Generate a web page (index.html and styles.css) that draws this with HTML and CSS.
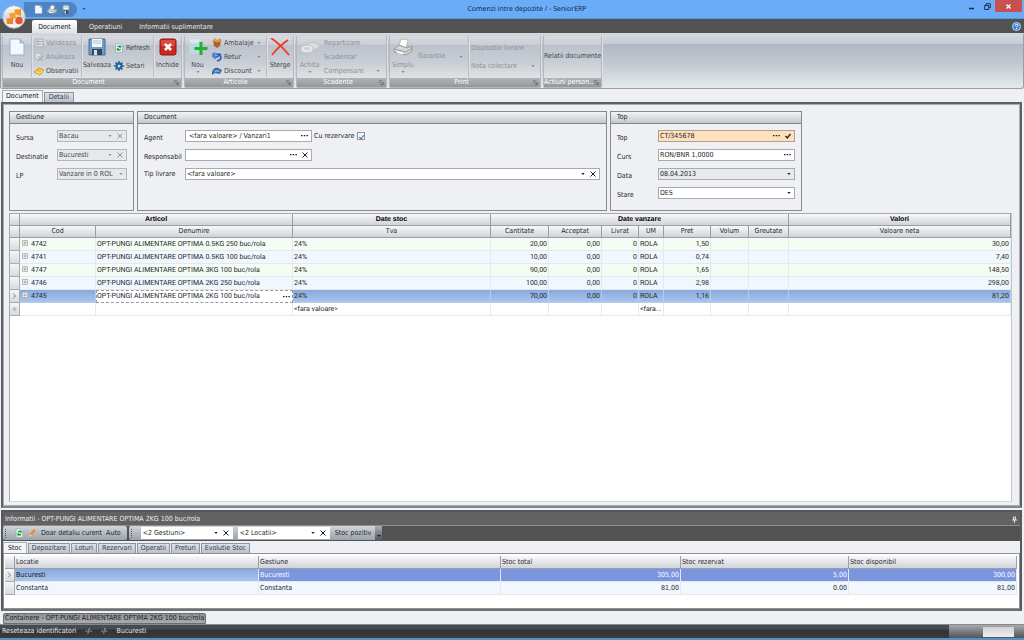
FILE: index.html
```html
<!DOCTYPE html>
<html lang="ro">
<head>
<meta charset="utf-8">
<title>Comenzi intre depozite / - SeniorERP</title>
<link rel="stylesheet" href="styles.css">
</head>
<body>
<svg class="defs" aria-hidden="true">
  <symbol id="i-page" viewBox="0 0 16 18"><path d="M1 1h10l4 4v12H1z" fill="#f4f9ff" stroke="#8fb2d8"/><path d="M11 1v4h4z" fill="#b9d4ee" stroke="#8fb2d8"/></symbol>
  <symbol id="i-floppy" viewBox="0 0 18 18"><path d="M1 1h16v16H1z" fill="#6f9cc2" stroke="#4a7093"/><path d="M4 1h10v8H4z" fill="#f2f6fa"/><path d="M5 3h8M5 5h8" stroke="#b4c2cf"/><path d="M4 11h10v6H4z" fill="#33475c"/><path d="M6 12h3v5H6z" fill="#d5dfe8"/></symbol>
  <symbol id="i-printer" viewBox="0 0 20 18"><path d="M8 1l7 1-2 8H5z" fill="#fff" stroke="#bbb"/><path d="M1 11l5-4 8 3 5-2v5l-6 4-12-3z" fill="#d5d6d8" stroke="#999"/><path d="M1 11l12 3 6-4" fill="none" stroke="#999"/><path d="M4 13l6 1.500v2L4 15z" fill="#fafafa"/></symbol>
  <symbol id="i-refresh" viewBox="0 0 10 12"><path d="M1 1h6l2 2v8H1z" fill="#fff" stroke="#8ba6c4"/><path d="M3 5q2-3 4 0M7 3v2H5M7 7q-2 3-4 0M3 9V7h2" fill="none" stroke="#149a31" stroke-width="1.4"/></symbol>
  <symbol id="i-arrow" viewBox="0 0 5 3"><path d="M0 0h5L2.500 3z" fill="currentColor"/></symbol>
  <symbol id="i-dots" viewBox="0 0 7 2"><path d="M0 0h1.500v1.200H0zM2.700 0h1.500v1.200H2.700zM5.400 0h1.500v1.200H5.400z" fill="currentColor"/></symbol>
  <symbol id="i-x" viewBox="0 0 6 6"><path d="M.5.5l5 5M5.500.5l-5 5" stroke="currentColor" stroke-width="1"/></symbol>
  <symbol id="i-plus" viewBox="0 0 6 6"><path d="M.5.5h5v5h-5z" fill="#f3f3f3" stroke="#b4b8bc"/><path d="M1.500 3h3M3 1.500v3" stroke="#888" stroke-width=".7"/></symbol>
  <symbol id="i-launch" viewBox="0 0 6 6"><path d="M.5 4V.5H4" fill="none" stroke="#777"/><path d="M2 2l3 3M5 2.500V5.500H2" fill="none" stroke="#666"/></symbol>
  <symbol id="i-row" viewBox="0 0 4 6"><path d="M.5.5L3 3 .5 5.500" fill="none" stroke="#7a808a"/></symbol>
</svg>
<div class="app">
  <header class="titlebar">
    <div class="quick">
      <button aria-label="Nou"><svg class="q1"><use href="#i-page"/></svg></button>
      <button aria-label="Print"><svg class="q2"><use href="#i-printer"/></svg></button>
      <button aria-label="Salveaza"><svg class="q2"><use href="#i-floppy"/></svg></button>
    </div>
    <button class="quick-more" aria-label="Mai mult"><svg class="arrow"><use href="#i-arrow"/></svg></button>
    <h1>Comenzi intre depozite / - SeniorERP</h1>
    <div class="winbtns">
      <button aria-label="Minimizare"><svg viewBox="0 0 7 7"><path d="M1 5.500h5" stroke="#1c2a3c" stroke-width="1.500"/></svg></button>
      <button aria-label="Restaurare"><svg viewBox="0 0 7 7"><path d="M.7 2.500h4v4h-4zM2 2V.7h4.300v4H5" fill="none" stroke="#1c3350"/></svg></button>
      <button class="close" aria-label="Inchide"><svg viewBox="0 0 7 7"><path d="M1.500 1.500l4 4M5.500 1.500l-4 4" stroke="#fff" stroke-width="1.200"/></svg></button>
    </div>
  </header>
  <button class="orb" aria-label="Meniu">
    <svg viewBox="0 0 24 24"><defs><linearGradient id="og" x2="0" y2="1"><stop offset="0" stop-color="#fff"/><stop offset=".5" stop-color="#d6d9dd"/><stop offset="1" stop-color="#f8fafb"/></linearGradient></defs><circle cx="12" cy="12" r="11.300" fill="url(#og)" stroke="#aab3bd"/><path d="M12.500 4.500l6.500-.5v7l-6-2z" fill="#f9931e"/><path d="M7 8.500l6-1 1 5-5 2z" fill="#f9a02c"/><path d="M4.500 13.500l6.500-.5v6H5z" fill="#f58220"/><circle cx="17" cy="15.500" r="3.700" fill="#df5a2a"/></svg>
  </button>
  <nav class="menu">
    <button class="on">Document</button><button>Operatiuni</button><button>Informatii suplimentare</button>
    <button class="help" aria-label="Ajutor"><svg viewBox="0 0 9 9"><circle cx="4.500" cy="4.500" r="4" fill="#3f87d6" stroke="#bcd9f5"/><path d="M3.200 3.600q.2-1.300 1.400-1.300t1.300 1.100q0 .8-1.400 1.500M4.500 6v1" stroke="#fff" fill="none"/></svg></button>
  </nav>
  <section class="ribbon">
    <div class="group g-doc">
      <div class="tools">
        <button class="big w-nou"><svg><use href="#i-page"/></svg>Nou</button>
        <div class="stack line w-val">
          <button class="off"><svg viewBox="0 0 10 10"><path d="M1 1h8v8H1z" fill="#dfe2e6" stroke="#a9adb3"/><path d="M2 3.500h6M2 6h6M4 2v6" stroke="#a9adb3"/></svg>Valideaza</button>
          <button class="off"><svg viewBox="0 0 10 10"><path d="M1 1h6v6H1z" fill="#dfe2e6" stroke="#b4b8be"/><path d="M4 4l5 5M9 4L4 9" stroke="#9a9ea5"/></svg>Anuleaza</button>
          <button><svg viewBox="0 0 10 10"><path d="M0 6l5-4 5 2-4 5z" fill="#f6bc34" stroke="#c98912" stroke-width=".7"/><path d="M2 5.700l4 1.700 2.500-3" fill="none" stroke="#fff0b8" stroke-width=".8"/></svg>Observatii</button>
        </div>
        <button class="big line w-salv"><svg><use href="#i-floppy"/></svg>Salveaza</button>
        <div class="stack two w-ref">
          <button><svg><use href="#i-refresh"/></svg>Refresh</button>
          <button><svg viewBox="0 0 10 10"><circle cx="5" cy="5" r="2.500" fill="none" stroke="#1f5f9e" stroke-width="2"/><path d="M5 0v2M5 8v2M0 5h2M8 5h2M1.500 1.500l1.400 1.400M7.100 7.100l1.400 1.400M8.500 1.500L7.100 2.900M2.900 7.100L1.500 8.500" stroke="#1f5f9e" stroke-width="1.500"/></svg>Setari</button>
        </div>
        <button class="big line w-inch"><svg viewBox="0 0 18 18"><rect x="1" y="1" width="16" height="16" rx="2" fill="#cb2a22" stroke="#8c1712"/><path d="M2 2h14v6H2z" fill="#e2625a" opacity=".6"/><path d="M6 6l6 6M12 6l-6 6" stroke="#fff" stroke-width="2.600"/></svg>Inchide</button>
      </div>
      <div class="cap"><span>Document</span><svg><use href="#i-launch"/></svg></div>
    </div>
    <div class="group g-art">
      <div class="tools">
        <button class="big w-add"><svg viewBox="0 0 20 18"><path d="M1 3q6-3 11 0v12q-6 3-11 0z" fill="#b9dbe0"/><ellipse cx="6.500" cy="3" rx="5.500" ry="2" fill="#d5ecef"/><path d="M13 4v13M6.500 10.500h13" stroke="#23b02e" stroke-width="3"/></svg>Nou<svg class="arrow"><use href="#i-arrow"/></svg></button>
        <div class="stack w-amb">
          <button><svg viewBox="0 0 10 10"><path d="M1 3l4-1 4 1-1 5-3 2-3-2z" fill="#a8652c"/><path d="M0 3l3-3 2 2 3-2 2 3-5 1.500z" fill="#d99a50"/></svg>Ambalaje<svg class="arrow"><use href="#i-arrow"/></svg></button>
          <button><svg viewBox="0 0 10 10"><path d="M1 5h4l4-3M5 9q5-1 3.500-5Q7 1 4 2.500" fill="none" stroke="#2d5fc0" stroke-width="1.700"/><path d="M0 1.500L3.500 0 4 7.500 0 5z" fill="#4d86d8"/></svg>Retur<svg class="arrow"><use href="#i-arrow"/></svg></button>
          <button><svg viewBox="0 0 10 10"><path d="M0 6q2-5 6-4l4 2-2 4-5-1-3 2z" fill="#2f6aa8"/><path d="M2 6h1l1-2 1 2 1-2 1 2h1" stroke="#9cc4ea" fill="none" stroke-width=".8"/></svg>Discount<svg class="arrow"><use href="#i-arrow"/></svg></button>
        </div>
        <button class="big line w-ster"><svg viewBox="0 0 20 18"><path d="M1 0q9 6 18 17M18 2Q8 9 2 17" fill="none" stroke="#ee3a22" stroke-width="1.800"/></svg>Sterge</button>
      </div>
      <div class="cap"><span>Articole</span><svg><use href="#i-launch"/></svg></div>
    </div>
    <div class="group g-sca">
      <div class="tools">
        <button class="big off w-ach"><svg viewBox="0 0 20 18"><ellipse cx="13" cy="8" rx="6.500" ry="3.500" fill="#dcdcdc" stroke="#bdbfc2"/><ellipse cx="7" cy="11" rx="6.500" ry="4" fill="#e6e6e6" stroke="#bdbfc2"/><ellipse cx="7" cy="10.500" rx="3" ry="1.500" fill="#cfd0d2"/></svg>Achita<svg class="arrow"><use href="#i-arrow"/></svg></button>
        <div class="stack w-rep">
          <button class="off">Repartizare</button><button class="off">Scadentar</button><button class="off">Compensare<svg class="arrow"><use href="#i-arrow"/></svg></button>
        </div>
      </div>
      <div class="cap"><span>Scadente</span><svg><use href="#i-launch"/></svg></div>
    </div>
    <div class="group g-pri">
      <div class="tools">
        <button class="big off w-sim"><svg><use href="#i-printer"/></svg>Simplu<svg class="arrow"><use href="#i-arrow"/></svg></button>
        <div class="stack one w-gar"><button class="off">Garantie<svg class="arrow"><use href="#i-arrow"/></svg></button></div>
        <div class="stack two line w-dis"><button class="off">Dispozitie livrare</button><button class="off">Nota colectare<svg class="arrow"><use href="#i-arrow"/></svg></button></div>
      </div>
      <div class="cap"><span>Print</span><svg><use href="#i-launch"/></svg></div>
    </div>
    <div class="group g-act">
      <div class="tools"><div class="stack one"><button>Relatii documente</button></div></div>
      <div class="cap"><span>Actiuni person...</span><svg><use href="#i-launch"/></svg></div>
    </div>
  </section>
  <nav class="tabs doc-tabs"><button class="on">Document</button><button>Detalii</button></nav>
  <main class="work">
    <div class="panels">
      <section class="panel p-ges">
        <h2>Gestiune</h2>
        <div class="form">
          <label for="sursa">Sursa</label>
          <div class="field dis"><select id="sursa" disabled><option>Bacau</option></select><svg class="arrow"><use href="#i-arrow"/></svg><button aria-label="Sterge sursa"><svg class="x"><use href="#i-x"/></svg></button></div>
          <label for="dest">Destinatie</label>
          <div class="field dis"><select id="dest" disabled><option>Bucuresti</option></select><svg class="arrow"><use href="#i-arrow"/></svg><button aria-label="Sterge destinatie"><svg class="x"><use href="#i-x"/></svg></button></div>
          <label for="lp">LP</label>
          <div class="field dis"><select id="lp" disabled><option>Vanzare in 0 ROL</option></select><svg class="arrow"><use href="#i-arrow"/></svg></div>
        </div>
      </section>
      <section class="panel p-doc">
        <h2>Document</h2>
        <div class="form">
          <label for="agent">Agent</label>
          <div class="pair"><div class="field short"><input id="agent" value=" &lt;fara valoare&gt; / Vanzari1"><button aria-label="Alege agent"><svg class="dots"><use href="#i-dots"/></svg></button></div>
            <label class="check" for="rez">Cu rezervare<input type="checkbox" id="rez" checked></label></div>
          <label for="resp">Responsabil</label>
          <div class="field short"><input id="resp"><button aria-label="Alege responsabil"><svg class="dots"><use href="#i-dots"/></svg></button><button aria-label="Sterge responsabil"><svg class="x"><use href="#i-x"/></svg></button></div>
          <label class="up" for="tip">Tip livrare</label>
          <div class="field"><select id="tip"><option>&lt;fara valoare&gt;</option></select><svg class="arrow"><use href="#i-arrow"/></svg><button aria-label="Sterge tip livrare"><svg class="x"><use href="#i-x"/></svg></button></div>
        </div>
      </section>
      <section class="panel p-top">
        <h2>Top</h2>
        <div class="form">
          <label for="top">Top</label>
          <div class="field hot"><input id="top" value="CT/345678"><button aria-label="Alege"><svg class="dots"><use href="#i-dots"/></svg></button><button aria-label="Confirma"><svg class="x" viewBox="0 0 6 6"><path d="M.5 3L2.300 5 5.500 1" fill="none" stroke="#222" stroke-width="1.300"/></svg></button></div>
          <label for="curs">Curs</label>
          <div class="field"><input id="curs" value="RON/BNR 1,0000"><button aria-label="Alege curs"><svg class="dots"><use href="#i-dots"/></svg></button></div>
          <label for="data">Data</label>
          <div class="field grey"><select id="data"><option>08.04.2013</option></select><svg class="arrow"><use href="#i-arrow"/></svg></div>
          <label for="stare">Stare</label>
          <div class="field"><select id="stare"><option>DES</option></select><svg class="arrow"><use href="#i-arrow"/></svg></div>
        </div>
      </section>
    </div>
    <div class="grid-box">
      <table class="grid">
        <colgroup><col class="c0"><col class="c1"><col class="c2"><col class="c3"><col class="c4"><col class="c5"><col class="c6"><col class="c7"><col class="c8"><col class="c9"><col class="c10"><col></colgroup>
        <thead>
          <tr class="bands"><th></th><th colspan="2">Articol</th><th>Date stoc</th><th colspan="7">Date vanzare</th><th>Valori</th></tr>
          <tr><th></th><th>Cod</th><th>Denumire</th><th>Tva</th><th>Cantitate</th><th>Acceptat</th><th>Livrat</th><th>UM</th><th>Pret</th><th>Volum</th><th>Greutate</th><th>Valoare neta</th></tr>
        </thead>
        <tbody>
          <tr class="green"><td class="ind"></td><td><svg class="plus"><use href="#i-plus"/></svg>4742</td><td>OPT-PUNGI ALIMENTARE OPTIMA 0.5KG 250 buc/rola</td><td>24%</td><td class="n">20,00</td><td class="n">0,00</td><td class="n">0</td><td>ROLA</td><td class="n">1,50</td><td></td><td></td><td class="n">30,00</td></tr>
          <tr class="blue"><td class="ind"></td><td><svg class="plus"><use href="#i-plus"/></svg>4741</td><td>OPT-PUNGI ALIMENTARE OPTIMA 0.5KG 100 buc/rola</td><td>24%</td><td class="n">10,00</td><td class="n">0,00</td><td class="n">0</td><td>ROLA</td><td class="n">0,74</td><td></td><td></td><td class="n">7,40</td></tr>
          <tr class="green"><td class="ind"></td><td><svg class="plus"><use href="#i-plus"/></svg>4747</td><td>OPT-PUNGI ALIMENTARE OPTIMA 3KG 100 buc/rola</td><td>24%</td><td class="n">90,00</td><td class="n">0,00</td><td class="n">0</td><td>ROLA</td><td class="n">1,65</td><td></td><td></td><td class="n">148,50</td></tr>
          <tr class="blue"><td class="ind"></td><td><svg class="plus"><use href="#i-plus"/></svg>4746</td><td>OPT-PUNGI ALIMENTARE OPTIMA 2KG 250 buc/rola</td><td>24%</td><td class="n">100,00</td><td class="n">0,00</td><td class="n">0</td><td>ROLA</td><td class="n">2,98</td><td></td><td></td><td class="n">298,00</td></tr>
          <tr class="sel"><td class="ind"><svg class="mark"><use href="#i-row"/></svg></td><td><svg class="plus"><use href="#i-plus"/></svg>4745</td><td class="edit"><div>OPT-PUNGI ALIMENTARE OPTIMA 2KG 100 buc/rola<button aria-label="Alege articol"><svg class="dots"><use href="#i-dots"/></svg></button></div></td><td>24%</td><td class="n">70,00</td><td class="n">0,00</td><td class="n">0</td><td>ROLA</td><td class="n">1,16</td><td></td><td></td><td class="n">81,20</td></tr>
          <tr><td class="ind"><svg class="mark" viewBox="0 0 6 6"><path d="M3 0v6M0 3h6M1 1l4 4M5 1L1 5" stroke="#a8abb0" stroke-width=".8"/></svg></td><td></td><td></td><td>&lt;fara valoare&gt;</td><td></td><td></td><td></td><td>&lt;fara...</td><td></td><td></td><td></td><td></td></tr>
        </tbody>
      </table>
    </div>
  </main>
  <section class="info">
    <h2 class="info-title">Informatii - OPT-PUNGI ALIMENTARE OPTIMA 2KG 100 buc/rola<svg viewBox="0 0 5 7"><path d="M1.500 1h2v3h-2zM0 4h5M2.500 4v3" fill="#777" stroke="#ddd"/></svg></h2>
    <div class="bar">
      <div class="bar-part bp1"><i class="grip"></i>
        <button aria-label="Reincarca"><svg class="bi"><use href="#i-refresh"/></svg></button>
        <button aria-label="Editeaza"><svg class="bi" viewBox="0 0 9 11"><path d="M1 10l1-4 4-5 2 2-4 5z" fill="#f48a2a"/><path d="M1 10l1-3 2 1z" fill="#f6d9b0"/></svg></button>
        <button>Doar detaliu curent</button><button>Auto</button></div>
      <div class="bar-part bp2"><i class="grip"></i>
        <div class="field combo"><select aria-label="Gestiuni"><option>&lt;2 Gestiuni&gt;</option></select><svg class="arrow"><use href="#i-arrow"/></svg><button aria-label="Sterge gestiuni"><svg class="x"><use href="#i-x"/></svg></button></div>
        <div class="field combo"><select aria-label="Locatii"><option>&lt;2 Locatii&gt;</option></select><svg class="arrow"><use href="#i-arrow"/></svg><button aria-label="Sterge locatii"><svg class="x"><use href="#i-x"/></svg></button></div>
        <button>Stoc pozitiv</button><button class="more" aria-label="Optiuni"><svg class="arrow"><use href="#i-arrow"/></svg></button></div>
    </div>
    <nav class="tabs"><button class="on">Stoc</button><button>Depozitare</button><button>Loturi</button><button>Rezervari</button><button>Operatii</button><button>Preturi</button><button>Evolutie Stoc</button></nav>
    <div class="stock-box">
      <table class="grid stock">
        <colgroup><col class="s0"><col class="s1"><col class="s2"><col class="s3"><col class="s4"><col></colgroup>
        <thead><tr><th></th><th>Locatie</th><th>Gestiune</th><th>Stoc total</th><th>Stoc rezervat</th><th>Stoc disponibil</th></tr></thead>
        <tbody>
          <tr class="pick"><td class="ind"><svg class="mark"><use href="#i-row"/></svg></td><td class="first">Bucuresti</td><td>Bucuresti</td><td class="n">305,00</td><td class="n">5,00</td><td class="n">300,00</td></tr>
          <tr class="blue"><td class="ind"></td><td>Constanta</td><td>Constanta</td><td class="n">81,00</td><td class="n">0.00</td><td class="n">81,00</td></tr>
        </tbody>
      </table>
    </div>
  </section>
  <div class="dock"><button>Containere - OPT-PUNGI ALIMENTARE OPTIMA 2KG 100 buc/rola</button></div>
  <footer class="status"><span class="reset">Reseteaza identificatori</span><span>-/-</span><span>-/-</span><span>Bucuresti</span><div class="end"><i></i></div></footer>
</div>
</body>
</html>
```
FILE: styles.css
```css
* { box-sizing: border-box; }
html, body { height: 100%; }
body { margin: 0; overflow: hidden; font: 7px/9px "DejaVu Sans Condensed", "DejaVu Sans", sans-serif; color: #25272b; text-rendering: geometricPrecision; }
button, input, select { font: inherit; color: inherit; margin: 0; padding: 0; border: 0; background: none; }
button { white-space: nowrap; }
h1, h2 { margin: 0; font: inherit; }
svg { display: block; flex: none; }
.defs { position: absolute; width: 0; height: 0; }
.arrow { width: 4px; height: 2px; }
.dots { width: 7px; height: 2px; }
.x { width: 6px; height: 6px; }

.app { position: relative; display: flex; flex-direction: column; height: 100%; background: #eff0f3; border-bottom: 2px solid #5c8fc4; }

.titlebar { display: flex; height: 19px; background: #6aacf7; border-bottom: 1px solid #5795dc; padding-left: 24px; }
.quick { display: flex; align-items: center; gap: 4px; width: 53px; height: 15px; margin-top: 2px; padding-left: 10px; background: #4f84c2; border-radius: 0 8px 8px 0; }
.q1 { width: 9px; height: 9px; }
.q2 { width: 10px; height: 9px; }
.quick-more { width: 14px; color: #31547e; }
.quick-more svg { margin: auto; }
.titlebar h1 { flex: 1; text-align: center; font-family: "Open Sans", "Noto Sans", sans-serif; line-height: 20px; color: #10233b; }
.winbtns { display: flex; height: 12px; padding-right: 2px; }
.winbtns button { width: 16px; }
.winbtns .close { width: 27px; background: #c75050; }
.winbtns svg { width: 7px; height: 7px; margin: auto; }

.orb { position: absolute; left: 2px; top: 5px; width: 24px; height: 24px; }
.orb svg { width: 24px; height: 24px; }

.menu { display: flex; height: 14px; padding-left: 32px; background: #525252; color: #e6e6e6; }
.menu button { padding: 2px 5px 0 12px; }
.menu .on { width: 45px; margin-top: 1px; padding: 1px 0 0; border-radius: 2px 2px 0 0; background: linear-gradient(#fff, #dfe2e6); color: #222; }
.menu .help { margin-left: auto; padding: 0 3px 0 0; }
.menu .help svg { width: 9px; height: 9px; }

.ribbon { display: flex; gap: 2px; height: 56px; padding: 2px 2px 0 1px; border: 1px solid #9a9ea2; border-top: 0; border-radius: 0 2px 3px 3px; background: linear-gradient(#d5d9df, #c6cbd4 11px, #b1b8c4 11px, #c2c7d0 30px, #e0e9e9 53px); color: #43464c; }
.group { display: flex; flex-direction: column; border: 1px solid #b4b8bd; border-top-color: #d0d3d8; border-radius: 2px; background: linear-gradient(#d8dbe0, #c9cdd5 9px, #bcc2cc 9px, #c9cdd4 26px, #dfe4e6 43px); box-shadow: 1px 0 #dde0e4; }
.g-doc { width: 180px; } .g-art { width: 110px; } .g-sca { width: 91px; } .g-pri { width: 152px; } .g-act { width: 59px; }
.tools { display: flex; flex: 1; }
.off { color: #8d9197; }
.big { display: flex; flex-direction: column; align-items: center; height: 41px; padding-top: 2px; }
.big svg { width: 20px; height: 18px; margin-bottom: 5px; }
.big svg.arrow { width: 4px; height: 2px; margin: 1px 0 0; color: #888c92; }
.line { border-left: 1px solid #b8bcc3; box-shadow: inset 1px 0 #dcdfe4; }
.w-nou { width: 28px; } .w-val { width: 50px; } .w-salv { width: 31px; } .w-ref { width: 41px; } .w-inch { width: 28px; }
.w-add { width: 25px; } .w-amb { width: 56px; } .w-ster { width: 27px; }
.w-ach { width: 25px; } .w-rep { width: 63px; }
.w-sim { width: 26px; } .w-gar { width: 52px; } .w-dis { width: 72px; }
.stack { display: grid; grid-template-rows: repeat(3, 14px); height: 41px; }
.stack.two { grid-template-rows: 18px 18px; padding-top: 3px; }
.stack.one { grid-template-rows: 41px; }
.stack button { display: flex; align-items: center; gap: 2px; padding-left: 2px; }
.stack button svg { width: 10px; height: 10px; }
.stack .arrow.arrow { width: 4px; height: 2px; margin-left: auto; margin-right: 5px; color: #888c92; }
.g-act .stack button { padding-left: 0; }
.cap { display: flex; align-items: center; height: 9px; background: linear-gradient(#b1b3b4, #949797); color: #fff; padding-right: 2px; }
.cap span { flex: 1; min-width: 0; overflow: hidden; text-align: center; white-space: nowrap; }
.cap svg { width: 5px; height: 5px; }

.tabs { display: flex; align-items: flex-end; gap: 1px; height: 12px; }
.tabs button { height: 10px; padding: 0 4px; border: 1px solid #8d949e; border-bottom: 0; background: linear-gradient(#dfe3e9, #b9c1cd); color: #353b45; }
.tabs .on { height: 11px; background: #f4f5f7; border-color: #a9adb3; color: #111; }
.info .tabs button { padding: 0 3px; }
.info .tabs .on { padding: 0 4px; }
.doc-tabs { height: 13px; padding-left: 2px; flex: none; }
.doc-tabs .on { height: 12px; padding: 0 3px; }

.work { display: flex; flex-direction: column; flex: 1; min-height: 0; margin: 0 2px 2px 1px; padding: 7px 8px 4px 6px; border: 2px solid #5d6066; border-bottom-color: #84888c; box-shadow: inset 0 0 0 1px #a9abb0; }
.panels { display: flex; gap: 3px; height: 100px; margin-bottom: 2px; }
.panel { border: 1px solid #868b91; }
.p-ges { flex: 0 1 125px; } .p-doc { flex: 0 1 470px; } .p-top { flex: 0 1 192px; }
.panel h2 { height: 12px; padding: 1px 6px 0; border-bottom: 1px solid #7e868f; background: linear-gradient(#f4f4f5, #c3c7cd); }
.form { display: grid; grid-template-columns: 41px 1fr; grid-auto-rows: 12px; row-gap: 7px; padding: 6px 6px 0; }
.form label { padding-top: 4px; }
.form label.up { padding-top: 2px; }
.field { display: flex; align-items: center; height: 12px; padding-right: 3px; border: 1px solid #a7abb0; background: #fff; color: #1d1f22; }
.field input, .field select { flex: 1; width: 0; min-width: 0; height: 10px; padding-left: 1px; appearance: none; color: inherit; opacity: 1; outline: 0; }
.field button { margin-left: 5px; }
.field.dis { background: #e6e8ea; color: #44474b; border-color: #b4b7ba; }
.field.dis svg { color: #8e9297; }
.field.grey { background: #e9eaec; }
.field.hot { background: #fedfbe; border-color: #b09f8d; }
.pair { display: flex; align-items: center; }
.field.short { width: 127px; }
.form .check { display: flex; align-items: center; gap: 3px; padding: 0 0 0 2px; }
.check input { display: grid; place-items: center; appearance: none; width: 8px; height: 8px; border: 1px solid #8d949e; background: #f3f6fa; }
.check input:checked::after { content: ""; width: 2px; height: 4px; border: solid #3f6fa5; border-width: 0 1px 1px 0; rotate: 40deg; }

.grid-box { flex: 1; min-height: 0; border: 1px solid #a4a7ab; border-right-color: #c5c7ca; border-bottom-color: #d5d7da; background: #fff; }
.grid { width: 100%; border-collapse: separate; border-spacing: 0; table-layout: fixed; }
.c0 { width: 10px; } .c1 { width: 76px; } .c2 { width: 197px; } .c3 { width: 198px; } .c4 { width: 58px; } .c5 { width: 53px; } .c6 { width: 37px; } .c7 { width: 25px; } .c8 { width: 47px; } .c9 { width: 38px; } .c10 { width: 40px; }
.grid th, .grid td { padding: 0 1px; overflow: hidden; white-space: nowrap; text-align: left; }
.grid th { height: 12px; border: 1px solid #9a9ea4; border-width: 0 1px 1px 0; background: linear-gradient(#f8f8f9, #d0d3d8); font-weight: 400; text-align: center; }
.grid .bands th { font: 700 7px/9px "Liberation Sans", Arial, sans-serif; color: #000; }
.grid td { height: 13px; border: 1px solid #e6e9ec; border-width: 0 1px 1px 0; font-family: Roboto, "Liberation Sans", sans-serif; }
.grid td.n { text-align: right; }
.grid td.ind { border-color: #a8abb0; background: linear-gradient(#f6f6f7, #d8dadd); padding: 0; }
.green td { background: #f5fcf3; }
.blue td { background: #f0f7ff; }
.sel td { background: linear-gradient(#86a9dd, #a9c5ec); border-color: #b5cbea; }
.sel td.edit { padding: 0; background: #fff; border: 1px dashed #999; }
.edit div { display: flex; align-items: center; padding-right: 2px; }
.edit button { margin-left: auto; }
.plus { display: inline-block; width: 6px; height: 6px; margin: 0 3px 0 1px; }
.mark { width: 5px; height: 6px; margin: auto; }

.info { margin: 0 2px 0 1px; border: 2px solid #55585c; border-bottom-color: #6d7074; }
.info-title { display: flex; align-items: center; justify-content: space-between; height: 14px; padding: 1px 3px 0 2px; background: #626262; border-bottom: 1px solid #8e8e8e; color: #eee; }
.info-title svg { width: 5px; height: 7px; }
.bar { display: flex; gap: 2px; height: 15px; background: #525252; }
.bar-part { display: flex; align-items: center; gap: 4px; height: 14px; background: linear-gradient(#d2d6dc, #b4bac3 50%, #9da3aa); border-radius: 2px; }
.bp1 { padding: 0 6px 0 2px; }
.bp2 { padding-left: 2px; }
.grip { width: 2px; height: 9px; border-left: 1px dotted #555; margin-right: 4px; }
.bi { width: 9px; height: 10px; }
.combo { width: 92px; height: 12px; margin-right: 1px; border-color: #fff; }
.more { display: flex; align-items: flex-end; width: 7px; height: 14px; padding: 0 0 3px 2px; background: linear-gradient(#a9afb8, #555a61); color: #111; }
.stock-box { height: 56px; padding: 2px 2px 1px 1px; border: 1px solid #8d9196; background: #fff; }
.grid.stock th { height: 13px; text-align: left; }
.stock td { font-family: "DejaVu Sans Condensed", sans-serif; }
.grid.stock td:not(.n) { font-family: "DejaVu Sans Condensed", sans-serif; }
.s0 { width: 10px; } .s1 { width: 244px; } .s2 { width: 242px; } .s3 { width: 180px; } .s4 { width: 168px; }
.pick td { background: #7b95de; color: #fff; }
.pick td.first { background: linear-gradient(#86a9dd, #a9c5ec); color: #111; }

.dock { height: 14px; padding: 2px 4px 0 3px; border-bottom: 1px solid #888; flex: none; }
.dock button { height: 11px; padding: 0 1px; border: 1px solid #6b6d6f; border-radius: 2px 2px 0 0; background: linear-gradient(#8f9293, #a9abac); color: #1b1b1b; }
.status { display: flex; align-items: center; gap: 9px; height: 13px; flex: none; padding-left: 2px; background: linear-gradient(#444a56 4px, #333 5px, #3b3b3b); color: #e8e8e8; }
.end { display: flex; justify-content: flex-end; align-items: center; width: 75px; height: 13px; margin-left: auto; padding-right: 10px; background: linear-gradient(#a9a9a9, #4c545c); }
.end i { width: 31px; height: 10px; background: linear-gradient(#d2d2d2, #efefef); }
```
